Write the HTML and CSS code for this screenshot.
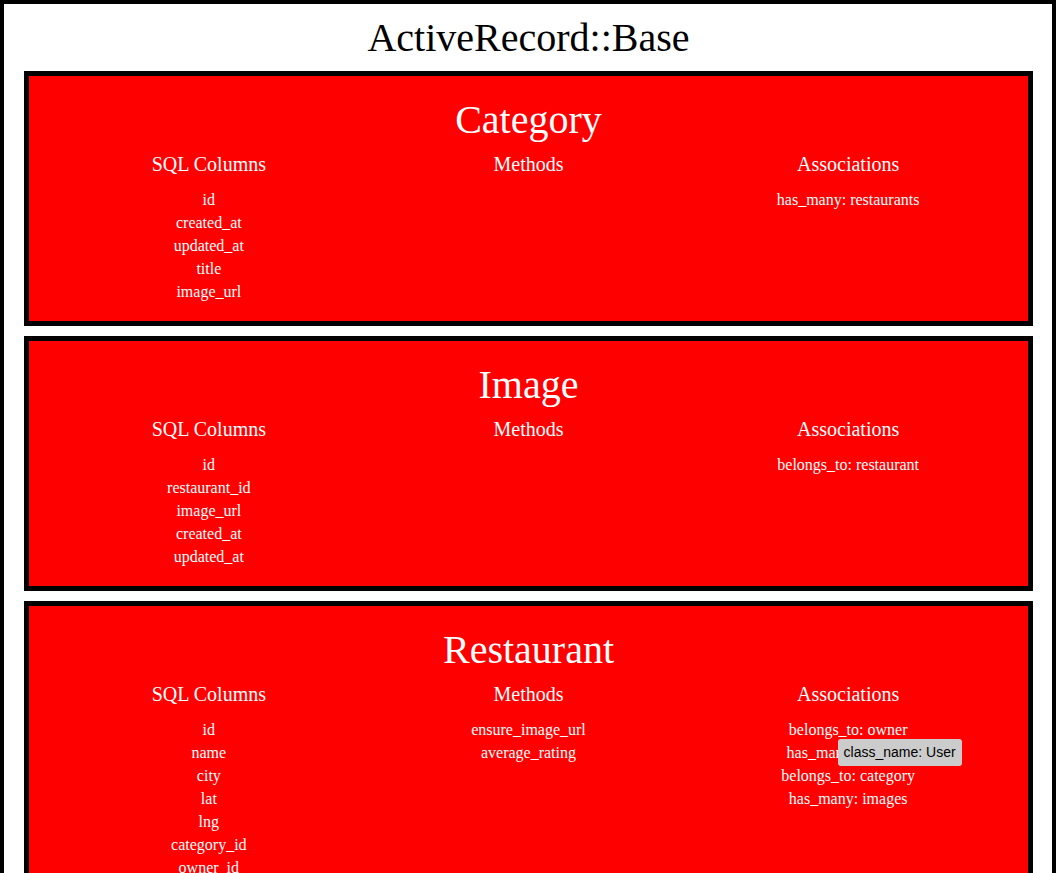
FILE: index.html
```html
<!DOCTYPE html>
<html>
<head>
<meta charset="utf-8">
<title>ActiveRecord::Base</title>
<link rel="stylesheet" href="styles.css">
</head>
<body>
<div class="page">
  <h1 class="title">ActiveRecord::Base</h1>

  <section class="model">
    <h2 class="model-name">Category</h2>
    <div class="columns">
      <div class="col">
        <h3 class="col-title">SQL Columns</h3>
        <ul class="items">
          <li>id</li>
          <li>created_at</li>
          <li>updated_at</li>
          <li>title</li>
          <li>image_url</li>
        </ul>
      </div>
      <div class="col">
        <h3 class="col-title">Methods</h3>
        <ul class="items"></ul>
      </div>
      <div class="col">
        <h3 class="col-title">Associations</h3>
        <ul class="items">
          <li>has_many: restaurants</li>
        </ul>
      </div>
    </div>
  </section>

  <section class="model">
    <h2 class="model-name">Image</h2>
    <div class="columns">
      <div class="col">
        <h3 class="col-title">SQL Columns</h3>
        <ul class="items">
          <li>id</li>
          <li>restaurant_id</li>
          <li>image_url</li>
          <li>created_at</li>
          <li>updated_at</li>
        </ul>
      </div>
      <div class="col">
        <h3 class="col-title">Methods</h3>
        <ul class="items"></ul>
      </div>
      <div class="col">
        <h3 class="col-title">Associations</h3>
        <ul class="items">
          <li>belongs_to: restaurant</li>
        </ul>
      </div>
    </div>
  </section>

  <section class="model">
    <h2 class="model-name">Restaurant</h2>
    <div class="columns">
      <div class="col">
        <h3 class="col-title">SQL Columns</h3>
        <ul class="items">
          <li>id</li>
          <li>name</li>
          <li>city</li>
          <li>lat</li>
          <li>lng</li>
          <li>category_id</li>
          <li>owner_id</li>
          <li>created_at</li>
          <li>updated_at</li>
        </ul>
      </div>
      <div class="col">
        <h3 class="col-title">Methods</h3>
        <ul class="items">
          <li>ensure_image_url</li>
          <li>average_rating</li>
        </ul>
      </div>
      <div class="col">
        <h3 class="col-title">Associations</h3>
        <ul class="items">
          <li>belongs_to: owner</li>
          <li><span class="has-tip">has_many: reviews<span class="tip">class_name: User</span></span></li>
          <li>belongs_to: category</li>
          <li>has_many: images</li>
        </ul>
      </div>
    </div>
  </section>
</div>
</body>
</html>
```

FILE: styles.css
```css
html, body {
  margin: 0;
  padding: 0;
  background: #fff;
}

body {
  font-family: "Liberation Serif", "Times New Roman", serif;
}

.page {
  border: 4px solid #000;
  padding: 0 19px 10px 20px;
  min-height: 100vh;
  box-sizing: border-box;
}

.title {
  margin: 0;
  padding: 11px 0 10px;
  font-size: 40px;
  line-height: 46px;
  font-weight: normal;
  text-align: center;
  color: #000;
}

.model {
  background: #ff0000;
  border: 5px solid #000;
  color: #fff;
  padding: 21px 20px 18px;
  margin-bottom: 10px;
}

.model-name {
  margin: 0 0 10px;
  font-size: 40px;
  line-height: 46px;
  font-weight: normal;
  text-align: center;
}

.columns {
  display: grid;
  grid-template-columns: 1fr 1fr 1fr;
}

.col {
  text-align: center;
}

.col-title {
  margin: 0 0 12px;
  font-size: 20px;
  line-height: 23px;
  font-weight: normal;
}

.items {
  list-style: none;
  margin: 0;
  padding: 0;
  font-size: 16px;
  line-height: 23px;
}

.has-tip {
  position: relative;
  display: inline-block;
}

.tip {
  position: absolute;
  top: -2px;
  left: 51px;
  background: #cccccc;
  color: #000;
  font-family: "Liberation Sans", Arial, sans-serif;
  font-size: 14px;
  line-height: 17px;
  padding: 5px 6px;
  border-radius: 3px;
  white-space: nowrap;
}
```
